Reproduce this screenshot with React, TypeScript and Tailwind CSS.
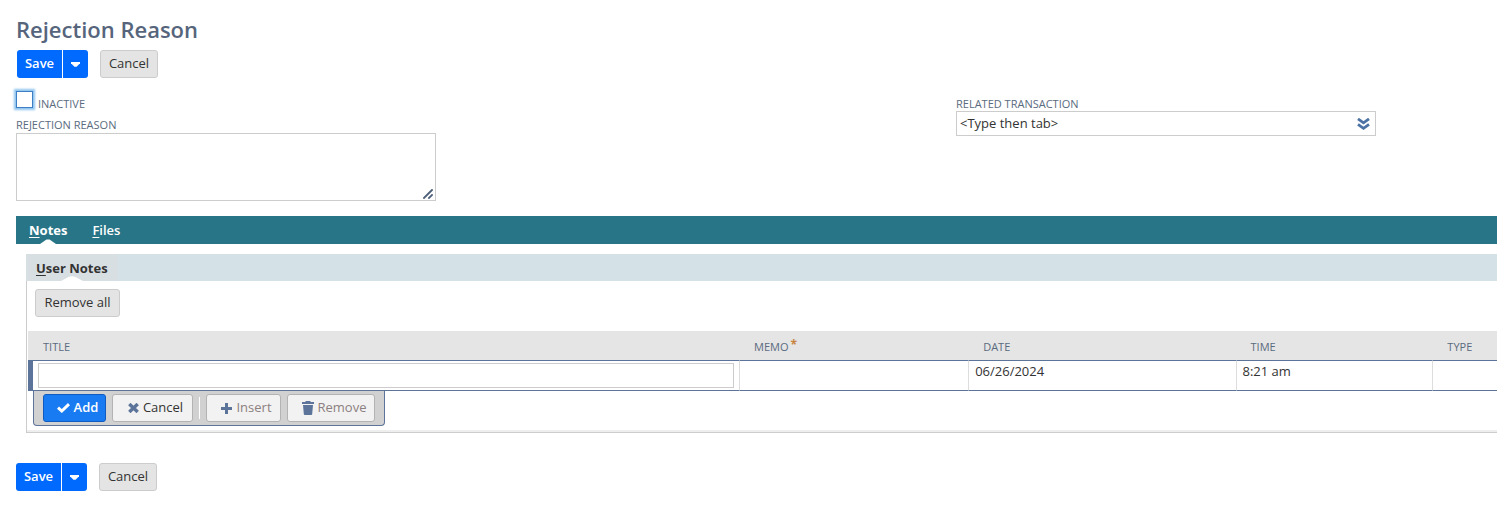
import React from "react";

interface ColumnHeader {
  label: string;
  width: string;
  required?: boolean;
}

const columns: ColumnHeader[] = [
  { label: "Title", width: "w-[48.4%]" },
  { label: "Memo", width: "w-[15.6%]", required: true },
  { label: "Date", width: "w-[18.2%]" },
  { label: "Time", width: "w-[13.4%]" },
  { label: "Type", width: "w-[4.4%]" },
];

const labelClass = "text-[11px] leading-4 uppercase text-[#5a6b80]";

const cellClass = "border-y border-l border-y-[#5c7499] border-l-[#dddddd]";

const FormButtons: React.FC = () => {
  return (
    <div className="flex h-7 gap-3 text-[13px]">
      <div className="flex gap-px">
        <button
          type="submit"
          className="w-[45px] rounded-l-[3px] bg-[#006aff] font-semibold text-white"
        >
          Save
        </button>
        <button
          type="button"
          aria-label="More save options"
          className="flex w-[25px] items-center justify-center rounded-r-[3px] bg-[#006aff]"
        >
          <svg width="9" height="5" viewBox="0 0 9 5" fill="#fff">
            <path d="M0 0h9v1.2L5.6 4.7H3.4L0 1.2z" />
          </svg>
        </button>
      </div>
      <button
        type="button"
        className="w-[58px] rounded-[3px] border border-[#cccccc] bg-[#e4e4e4] font-medium text-[#333333]"
      >
        Cancel
      </button>
    </div>
  );
};

interface RowButtonProps {
  label: string;
  width: string;
  tone: string;
  children: React.ReactNode;
}

const RowButton: React.FC<RowButtonProps> = ({ label, width, tone, children }) => {
  return (
    <button
      type="button"
      className={`flex h-7 items-center justify-center gap-1 rounded-[3px] border pl-1.5 text-[13px] font-medium ${width} ${tone}`}
    >
      {children}
      {label}
    </button>
  );
};

const App: React.FC = () => {
  return (
    <main className="overflow-x-hidden bg-white pt-4 pb-7 pl-4 font-['Open_Sans','Noto_Sans',sans-serif] text-[#333333]">
      <h1 className="text-[22px] leading-[26px] font-semibold text-[#56657c]">
        Rejection Reason
      </h1>

      <div className="mt-2 pl-px">
        <FormButtons />
      </div>

      {/* FIELDS */}
      <div className="mt-3 grid grid-cols-3 pr-[71px]">
        <div>
          <div className="flex h-[22px] items-start gap-[5px]">
            <input
              id="inactive"
              type="checkbox"
              className="mt-px size-[17px] appearance-none border border-[#3d7fc4] bg-white shadow-[0_0_2px_2px_#8fc4ee]"
            />
            <label htmlFor="inactive" className={`mt-1.5 ${labelClass}`}>
              Inactive
            </label>
          </div>
          <label htmlFor="reason" className={`mt-[5px] block h-4 ${labelClass}`}>
            Rejection Reason
          </label>
          <div className="relative h-[68px] w-[420px]">
            <textarea
              id="reason"
              className="block h-full w-full resize-none border border-[#cccccc] p-1 text-[13px]"
            />
            <svg
              className="pointer-events-none absolute right-[3px] bottom-[2px]"
              width="10"
              height="10"
              viewBox="0 0 10 10"
              stroke="#4d5f79"
              strokeWidth="1.8"
              strokeLinecap="square"
            >
              <path d="M1 9L9 1M6 9L9 6" />
            </svg>
          </div>
        </div>

        <div className="col-start-3 pt-1.5">
          <label htmlFor="transaction" className={`block h-[15px] ${labelClass}`}>
            Related Transaction
          </label>
          <div className="flex h-[25px] w-[420px] items-center border border-[#cccccc] pr-[5px]">
            <input
              id="transaction"
              type="text"
              defaultValue="<Type then tab>"
              className="h-full min-w-0 flex-1 px-[3px] pb-px text-[13px] outline-none"
            />
            <button type="button" aria-label="Show transactions">
              <svg
                width="13"
                height="12"
                viewBox="0 0 13 12"
                fill="none"
                stroke="#4d72a6"
                strokeWidth="2.8"
              >
                <path d="M1 .9L6.5 4.8 12 .9M1 6.400L6.500 10.300 12 6.400" />
              </svg>
            </button>
          </div>
        </div>
      </div>

      {/* TABS */}
      <div role="tablist" className="mt-[15px] flex h-7 gap-[25px] bg-[#277587] pl-[13px] text-[13px] text-white">
        <button type="button" role="tab" aria-selected="true" className="relative pt-0.5 font-bold">
          <u className="underline-offset-2">N</u>otes
          <svg className="absolute bottom-0 left-1/2 -translate-x-1/2" width="16" height="5" fill="#fff">
            <path d="M0 5L6.500 .5h3L16 5z" />
          </svg>
        </button>
        <button type="button" role="tab" aria-selected="false" className="pt-0.5 font-semibold">
          <u className="underline-offset-2">F</u>iles
        </button>
      </div>

      {/* USER NOTES */}
      <section className="mt-2.5 ml-2.5 border-b border-l border-[#cccccc]">
        <div role="tablist" className="-ml-px flex h-[27px] bg-[#d4e2e7] text-[13px]">
          <button
            type="button"
            role="tab"
            aria-selected="true"
            className="relative bg-[#d8dfe3] px-2.5 pt-0.5 font-bold"
          >
            <u className="underline-offset-2">U</u>ser Notes
            <svg className="absolute bottom-0 left-1/2 -translate-x-1/2" width="22" height="5" fill="#fff">
              <path d="M0 5L8 .8Q11 -.4 14 .8L22 5z" />
            </svg>
          </button>
        </div>

        <button
          type="button"
          className="mt-2 ml-2 block h-7 w-[85px] rounded-[3px] border border-[#cccccc] bg-[#e4e4e4] text-[13px] font-medium"
        >
          Remove all
        </button>

        <div className="mt-3.5 border-b-2 border-[#eeeeee] pb-1 pl-px">
          <table className="w-full table-fixed border-separate border-spacing-0 text-left">
            <thead>
              <tr className="h-[29px] bg-[#e5e5e5]">
                {columns.map((column) => (
                  <th
                    key={column.label}
                    className={`pt-[3px] pl-[15px] text-[11px] leading-4 font-normal text-[#5a6b80] uppercase ${column.width}`}
                  >
                    {column.label}
                    {column.required && (
                      <span className="ml-0.5 align-top text-xs leading-3 font-bold text-[#c7843f]">*</span>
                    )}
                  </th>
                ))}
              </tr>
            </thead>
            <tbody>
              <tr className="h-[31px] align-top text-[13px] leading-4">
                <td className="border-y border-l-[5px] border-[#5c7499] py-0.5 pr-[5px] pl-[5px]">
                  <input
                    type="text"
                    aria-label="Title"
                    className="block h-[25px] w-full border border-[#cccccc] px-1"
                  />
                </td>
                <td className={cellClass} />
                <td className={`pt-0.5 pl-1.5 ${cellClass}`}>06/26/2024</td>
                <td className={`pt-0.5 pl-1.5 ${cellClass}`}>8:21 am</td>
                <td className={cellClass} />
              </tr>
            </tbody>
          </table>

          {/* ROW ACTIONS */}
          <div className="ml-[5px] flex h-[35px] w-[352px] items-center gap-1.5 rounded-b-[4px] border border-t-0 border-[#5c7499] bg-[#d1d1d1] px-[9px]">
            <RowButton label="Add" width="w-[63px]" tone="border-[#0f5bc0] bg-[#187bf2] font-semibold text-white">
              <svg width="13" height="10" viewBox="0 0 13 10" fill="none" stroke="#fff" strokeWidth="3">
                <path d="M1 4.600L4.800 8 12 1.200" />
              </svg>
            </RowButton>
            <RowButton label="Cancel" width="w-[81px]" tone="border-[#b3b3b3] bg-[#f2f2f2] text-[#333333]">
              <svg width="11" height="10" viewBox="0 0 11 10" fill="none" stroke="#5c7499" strokeWidth="3.400">
                <path d="M1.300 1l8.400 8M9.700 1l-8.400 8" />
              </svg>
            </RowButton>
            <span className="h-[22px] w-px bg-white" />
            <RowButton label="Insert" width="w-[75px]" tone="border-[#b3b3b3] bg-[#f2f2f2] text-[#8c8080]">
              <svg width="11" height="11" viewBox="0 0 11 11" fill="none" stroke="#5c7499" strokeWidth="3">
                <path d="M5.500 0v11M0 5.500h11" />
              </svg>
            </RowButton>
            <RowButton label="Remove" width="w-[88px]" tone="border-[#b3b3b3] bg-[#f2f2f2] text-[#8c8080]">
              <svg width="12" height="14" viewBox="0 0 12 14" fill="#5c7499">
                <path d="M0 1h3.500V0h5v1H12v2H0zM1 4h10l-.8 9q-.1 1-1 1H2.800q-.9 0-1-1z" />
              </svg>
            </RowButton>
          </div>
        </div>
      </section>

      <div className="mt-[30px]">
        <FormButtons />
      </div>
    </main>
  );
};

export default App;
